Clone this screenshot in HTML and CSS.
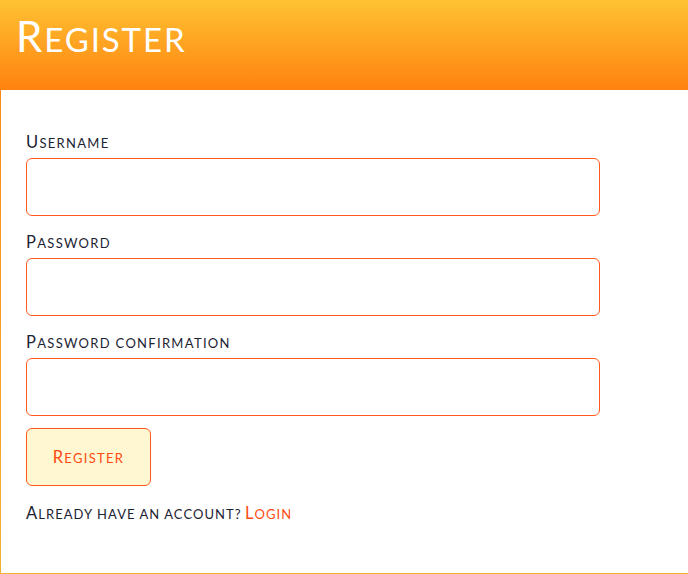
FILE: index.html
```html
<!DOCTYPE html>
<html>
<head>
<meta charset="utf-8">
<link rel="stylesheet" href="styles.css">
</head>
<body>
<div class="page">
  <header class="hero">
    <h1 class="title sc">Register</h1>
  </header>
  <form class="form">
    <div class="field">
      <label class="label sc">Username</label>
      <input class="input" type="text">
    </div>
    <div class="field">
      <label class="label sc">Password</label>
      <input class="input" type="password">
    </div>
    <div class="field">
      <label class="label sc">Password confirmation</label>
      <input class="input" type="password">
    </div>
    <button class="btn" type="button"><span class="btn-text sc">Register</span></button>
    <p class="note"><span class="note-text sc">Already have an account?</span> <a class="link sc" href="#">Login</a></p>
  </form>
</div>
</body>
</html>
```
FILE: styles.css
```css
html, body {
  margin: 0;
  padding: 0;
  background: #fff;
}
body {
  font-family: "Lato", "Open Sans", sans-serif;
  color: #1c2333;
}
.sc {
  text-transform: uppercase;
}
.page {
  width: 760px;
  height: 573px;
  border-style: solid;
  border-width: 0 0 1px 1px;
  border-image: linear-gradient(to bottom, #ff8212, #f2b233) 1;
  box-sizing: content-box;
}
.hero {
  height: 90px;
  margin-left: -1px;
  background: linear-gradient(to bottom, #ffc233, #ff820f);
  display: flex;
  align-items: center;
  padding-left: 16px;
}
.title {
  margin: 0 0 16px;
  color: #fff;
  font-weight: 400;
  font-size: 33px;
  line-height: 44px;
  letter-spacing: 1.9px;
}
.title::first-letter {
  font-size: 42px;
}
.form {
  padding: 38px 0 0 25px;
  width: 574px;
}
.field {
  display: flex;
  flex-direction: column;
  margin-bottom: 12px;
}
.label {
  display: block;
  height: 22px;
  font-size: 13px;
  letter-spacing: 1.3px;
  line-height: 22px;
  margin: 3px 0 5px;
}
.label::first-letter {
  font-size: 16.5px;
}
.input {
  height: 58px;
  box-sizing: border-box;
  border: 1px solid #ff5a1c;
  border-radius: 6px;
  outline: none;
  background: #fff;
  font: inherit;
}
.btn {
  height: 58px;
  width: 125px;
  box-sizing: border-box;
  border: 1px solid #ff5a1c;
  border-radius: 6px;
  background: #fff7d1;
  color: #ff4a12;
  font-family: inherit;
  padding: 0;
  display: flex;
  align-items: center;
  justify-content: center;
}
.btn-text {
  display: inline-block;
  font-size: 13px;
  letter-spacing: 1.3px;
}
.btn-text::first-letter {
  font-size: 16.5px;
}
.note {
  margin: 16px 0 0;
  height: 22px;
  font-size: 13px;
  line-height: 22px;
}
.note-text,
.link {
  display: inline-block;
  letter-spacing: 1.05px;
}
.note-text::first-letter,
.link::first-letter {
  font-size: 16.5px;
}
.link {
  color: #ff4a12;
  text-decoration: none;
}
```
